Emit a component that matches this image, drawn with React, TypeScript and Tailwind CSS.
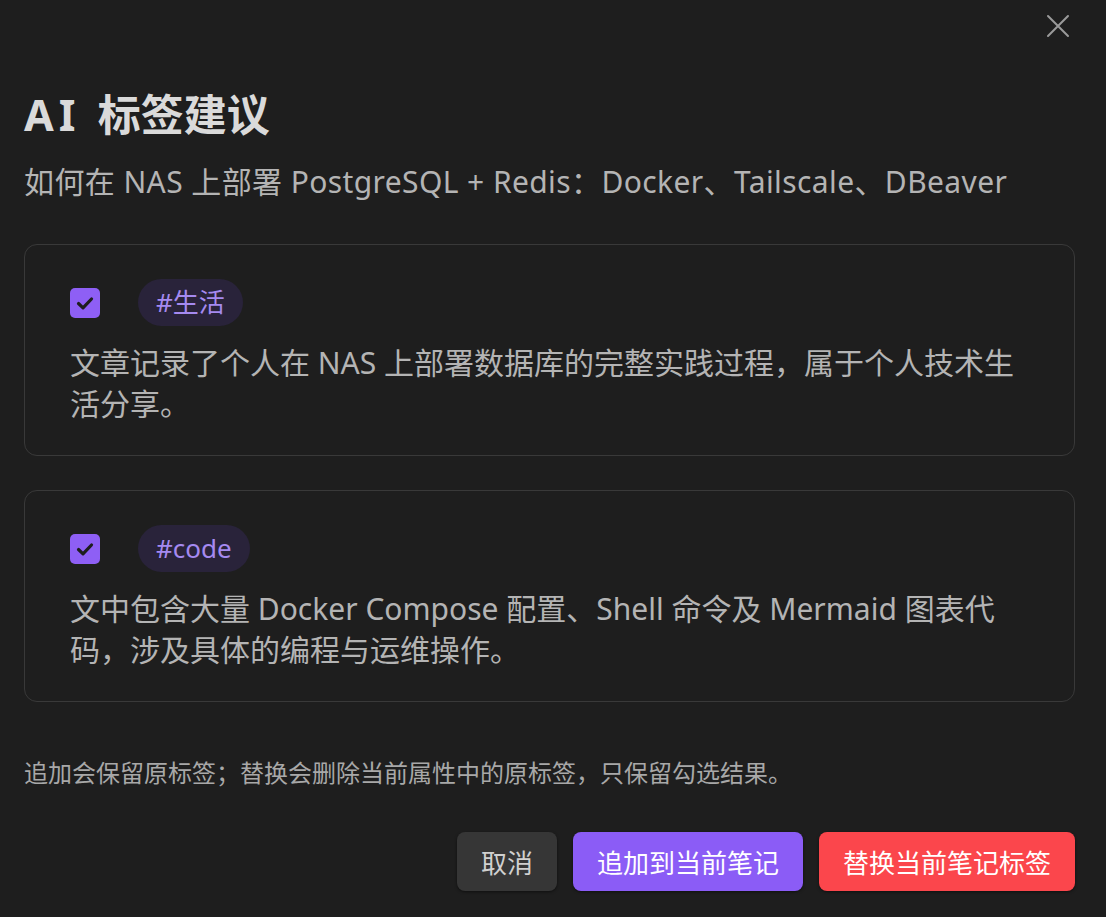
import React from "react";

const FONT = '"Noto Sans", "Noto Sans CJK SC", sans-serif';
const UI_FONT = '"Noto Sans CJK SC", "Noto Sans", sans-serif';

type Suggestion = { tag: string; reason: string };

const suggestions: Suggestion[] = [
  {
    tag: "#生活",
    reason: "文章记录了个人在 NAS 上部署数据库的完整实践过程，属于个人技术生活分享。",
  },
  {
    tag: "#code",
    reason: "文中包含大量 Docker Compose 配置、Shell 命令及 Mermaid 图表代码，涉及具体的编程与运维操作。",
  },
];

function CheckBox() {
  return (
    <div className="w-[30px] h-[30px] rounded-[5px] bg-[#8e5ff5] flex items-center justify-center shrink-0">
      <svg width="24" height="24" viewBox="0 0 24 24" fill="none">
        <path d="M5.5 12.5l4.5 4.3L18.5 8" stroke="#1e1e1e" strokeWidth="3.2" strokeLinecap="round" strokeLinejoin="round" />
      </svg>
    </div>
  );
}

function SuggestionCard({ s }: { s: Suggestion }) {
  return (
    <div className="border border-[#393939] rounded-[13px] pl-[45px] pr-[40px] pt-[34px] pb-[31px]">
      <div className="flex items-center gap-[38px] h-[47px]">
        <CheckBox />
        <span className="h-[47px] rounded-full bg-[#29233a] text-[#a58af0] text-[26px] px-[18px] flex items-center">
          {s.tag}
        </span>
      </div>
      <p className="mt-[16px] text-[30px] leading-[41px] text-[#b4b4b4]">{s.reason}</p>
    </div>
  );
}

export default function App() {
  return (
    <div className="w-[1106px] h-[917px] bg-[#1e1e1e] relative overflow-hidden" style={{ fontFamily: FONT }}>
      <button className="absolute top-[14px] right-[36px] w-[24px] h-[24px] flex items-center justify-center">
        <svg width="24" height="24" viewBox="0 0 24 24" fill="none">
          <path d="M2 2L22 22M22 2L2 22" stroke="#9a9a9a" strokeWidth="2" strokeLinecap="round" />
        </svg>
      </button>
      <div className="pl-[24px] pr-[31px] pt-[86px] flex flex-col">
        <h1 className="text-[43px] leading-[58px] font-bold text-[#dadada]">
          <span className="tracking-[5px] mr-[6px]">AI</span> 标签建议
        </h1>
        <p className="mt-[18px] text-[30px] leading-[40px] tracking-[0.4px] text-[#b4b4b4] whitespace-nowrap">
          如何在 NAS 上部署 PostgreSQL + Redis：Docker、Tailscale、DBeaver
        </p>
        <div className="mt-[42px] flex flex-col gap-[34px]">
          {suggestions.map((s) => (
            <SuggestionCard key={s.tag} s={s} />
          ))}
        </div>
        <p className="mt-[52px] text-[24px] leading-[36px] text-[#a8a8a8]" style={{ fontFamily: UI_FONT }}>
          追加会保留原标签；替换会删除当前属性中的原标签，只保留勾选结果。
        </p>
        <div className="mt-[42px] flex justify-end gap-[16px]" style={{ fontFamily: UI_FONT }}>
          <button className="h-[59px] px-[24px] rounded-[8px] bg-[#363636] text-[#d0d0d0] text-[26px] shadow-[0_1px_3px_rgba(0,0,0,0.5)]">
            取消
          </button>
          <button className="h-[59px] px-[24px] rounded-[8px] bg-[#8b5cf6] text-white text-[26px] shadow-[0_1px_3px_rgba(0,0,0,0.5)]">
            追加到当前笔记
          </button>
          <button className="h-[59px] px-[24px] rounded-[8px] bg-[#fb464c] text-white text-[26px] shadow-[0_1px_3px_rgba(0,0,0,0.5)]">
            替换当前笔记标签
          </button>
        </div>
      </div>
    </div>
  );
}
